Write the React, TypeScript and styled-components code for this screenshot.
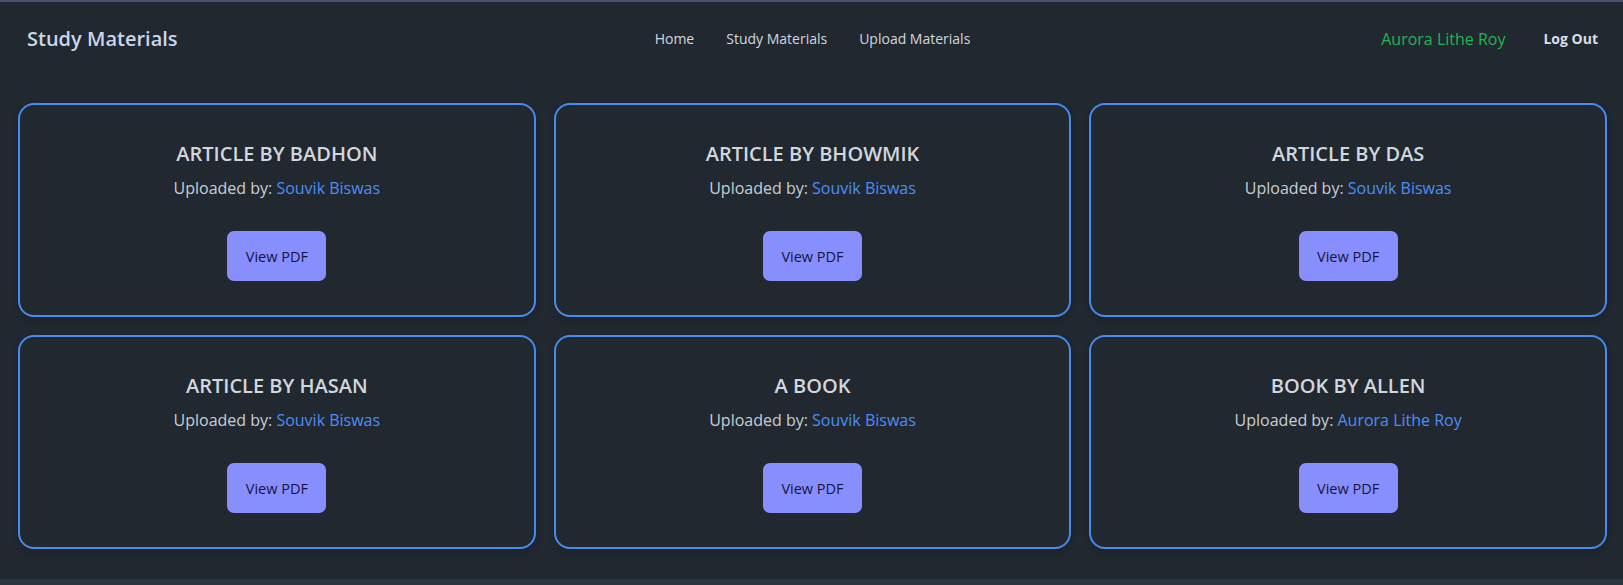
import styled, { createGlobalStyle } from "styled-components";

interface Material {
  title: string;
  uploader: string;
}

const materials: Material[] = [
  { title: "Article by Badhon", uploader: "Souvik Biswas" },
  { title: "Article by Bhowmik", uploader: "Souvik Biswas" },
  { title: "Article by Das", uploader: "Souvik Biswas" },
  { title: "Article by Hasan", uploader: "Souvik Biswas" },
  { title: "A book", uploader: "Souvik Biswas" },
  { title: "Book by Allen", uploader: "Aurora Lithe Roy" },
];

const GlobalStyle = createGlobalStyle`
  html, body {
    margin: 0;
    padding: 0;
    background: #212830;
    font-family: "Open Sans", "Noto Sans", sans-serif;
  }
  * {
    box-sizing: border-box;
  }
`;

const Page = styled.div`
  min-height: 100vh;
  display: flex;
  flex-direction: column;
  border-top: 2px solid #4b5072;
  background: #212830;
`;

const StyledNav = styled.nav`
  height: 73px;
  display: grid;
  grid-template-columns: 1fr auto 1fr;
  align-items: center;
  padding: 0 25px 0 27px;
`;

const StyledBrand = styled.div`
  font-size: 20px;
  font-weight: 600;
  color: #c9d6ec;
`;

const StyledLinks = styled.div`
  display: flex;
  gap: 32px;
`;

const StyledLink = styled.a`
  font-size: 14px;
  color: #d3d7de;
  text-decoration: none;
  cursor: pointer;
`;

const StyledUser = styled.div`
  display: flex;
  justify-content: flex-end;
  align-items: center;
  gap: 38px;
`;

const StyledUserName = styled.span`
  font-size: 16px;
  color: #22b552;
`;

const StyledLogOut = styled.button`
  background: none;
  border: none;
  padding: 0;
  font-family: inherit;
  font-size: 14px;
  font-weight: 700;
  color: #d7deea;
  cursor: pointer;
`;

// three equal columns, cards keep a fixed height
const StyledGrid = styled.main`
  display: grid;
  grid-template-columns: repeat(3, 1fr);
  gap: 18px;
  padding: 28px 16px 30px 18px;
`;

const StyledCard = styled.div`
  height: 214px;
  border: 2px solid #478bf0;
  border-radius: 16px;
  display: flex;
  flex-direction: column;
  align-items: center;
  padding-top: 36px;
  box-shadow: 0 4px 8px rgba(0, 0, 0, 0.15);
`;

const StyledTitle = styled.h2`
  margin: 0;
  font-size: 20px;
  font-weight: 600;
  line-height: 26px;
  color: #d2d6dd;
  text-transform: uppercase;
`;

const StyledUploaded = styled.p`
  margin: 10px 0 0;
  font-size: 16px;
  line-height: 22px;
  color: #c9ced6;
`;

const StyledUploader = styled.span`
  color: #4b8ef7;
`;

const StyledButton = styled.button`
  margin-top: 32px;
  width: 99px;
  height: 50px;
  border: none;
  border-radius: 7px;
  background: #878fff;
  color: #16133d;
  font-family: inherit;
  font-size: 14.5px;
  font-weight: 500;
  cursor: pointer;
`;

const StyledFooter = styled.div`
  margin-top: auto;
  height: 6px;
  background: #2b353e;
`;

export default function App() {
  return (
    <>
      <GlobalStyle />
      <Page>
        <StyledNav>
          <StyledBrand>Study Materials</StyledBrand>
          <StyledLinks>
            <StyledLink>Home</StyledLink>
            <StyledLink>Study Materials</StyledLink>
            <StyledLink>Upload Materials</StyledLink>
          </StyledLinks>
          <StyledUser>
            <StyledUserName>Aurora Lithe Roy</StyledUserName>
            <StyledLogOut>Log Out</StyledLogOut>
          </StyledUser>
        </StyledNav>
        <StyledGrid>
          {materials.map((material, index) => (
            <StyledCard key={index}>
              <StyledTitle>{material.title}</StyledTitle>
              <StyledUploaded>
                Uploaded by: <StyledUploader>{material.uploader}</StyledUploader>
              </StyledUploaded>
              <StyledButton>View PDF</StyledButton>
            </StyledCard>
          ))}
        </StyledGrid>
        <StyledFooter />
      </Page>
    </>
  );
}
